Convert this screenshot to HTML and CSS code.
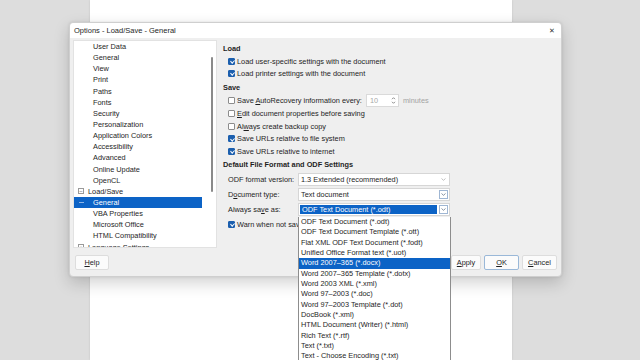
FILE: index.html
```html
<!DOCTYPE html>
<html>
<head>
<meta charset="utf-8">
<link rel="stylesheet" href="styles.css">
</head>
<body>
<div class="desk">
  <div class="page"></div>
</div>

<div class="dialog">
  <div class="titlebar">
    <span class="title">Options - Load/Save - General</span>
    <span class="close">✕</span>
  </div>
  <div class="main">
    <div class="tree">
      <div class="tree-rows">
        <div class="row child">User Data</div>
        <div class="row child">General</div>
        <div class="row child">View</div>
        <div class="row child">Print</div>
        <div class="row child">Paths</div>
        <div class="row child">Fonts</div>
        <div class="row child">Security</div>
        <div class="row child">Personalization</div>
        <div class="row child">Application Colors</div>
        <div class="row child">Accessibility</div>
        <div class="row child">Advanced</div>
        <div class="row child">Online Update</div>
        <div class="row child">OpenCL</div>
        <div class="row parent"><span class="exp">−</span>Load/Save</div>
        <div class="row child sel"><span class="line"></span>General</div>
        <div class="row child">VBA Properties</div>
        <div class="row child">Microsoft Office</div>
        <div class="row child">HTML Compatibility</div>
        <div class="row parent"><span class="exp">+</span>Language Settings</div>
      </div>
      <div class="scroll"><div class="thumb"></div></div>
    </div>

    <div class="panel">
      <div class="hdr">Load</div>
      <div class="opt"><span class="cb on"></span><span>Load user-specific settings with the document</span></div>
      <div class="opt"><span class="cb on"></span><span>Load printer settings with the document</span></div>

      <div class="hdr">Save</div>
      <div class="opt auto"><span class="cb"></span><span>Save <u>A</u>utoRecovery information every:</span>
        <span class="spin"><span class="num">10</span>
          <svg class="arrows" width="5" height="9" viewBox="0 0 5 9"><path d="M1 3.2 L2.5 1.7 L4 3.2 M1 5.8 L2.5 7.3 L4 5.8" fill="none" stroke="#707070" stroke-width="0.8"/></svg>
        </span>
        <span class="dim">minutes</span></div>
      <div class="opt"><span class="cb"></span><span><u>E</u>dit document properties before saving</span></div>
      <div class="opt"><span class="cb"></span><span>Al<u>w</u>ays create backup copy</span></div>
      <div class="opt"><span class="cb on"></span><span>Save URLs relative to file system</span></div>
      <div class="opt"><span class="cb on"></span><span>Save URLs relative to internet</span></div>

      <div class="hdr">Default File Format and ODF Settings</div>
      <div class="frow"><span class="lbl">ODF format version:</span>
        <span class="combo"><span class="ctext">1.3 Extended (recommended)</span><span class="cbtn plain"><svg width="5" height="3" viewBox="0 0 5 3"><path d="M0.5 0.5 L2.5 2.3 L4.5 0.5" fill="none" stroke="#b0b0b0" stroke-width="0.8"/></svg></span></span></div>
      <div class="frow"><span class="lbl">D<u>o</u>cument type:</span>
        <span class="combo"><span class="ctext">Text document</span><span class="cbtn"><svg width="5" height="3" viewBox="0 0 5 3"><path d="M0.5 0.5 L2.5 2.3 L4.5 0.5" fill="none" stroke="#6a7a8c" stroke-width="0.8"/></svg></span></span></div>
      <div class="frow"><span class="lbl">Always sa<u>v</u>e as:</span>
        <span class="combo"><span class="ctext active">ODF Text Document (*.odt)</span><span class="cbtn"><svg width="5" height="3" viewBox="0 0 5 3"><path d="M0.5 0.5 L2.5 2.3 L4.5 0.5" fill="none" stroke="#6a7a8c" stroke-width="0.8"/></svg></span></span></div>
      <div class="opt warn"><span class="cb on"></span><span>Warn when not saving in ODF or default format</span></div>
    </div>
  </div>
  <div class="footer">
    <button class="btn help"><u>H</u>elp</button>
    <span class="grow"></span>
    <button class="btn apply"><u>A</u>pply</button>
    <button class="btn ok"><u>O</u>K</button>
    <button class="btn cancel"><u>C</u>ancel</button>
  </div>
</div>

<div class="dropdown">
  <div class="item">ODF Text Document (*.odt)</div>
  <div class="item">ODF Text Document Template (*.ott)</div>
  <div class="item">Flat XML ODF Text Document (*.fodt)</div>
  <div class="item">Unified Office Format text (*.uot)</div>
  <div class="item hi">Word 2007–365 (*.docx)</div>
  <div class="item">Word 2007–365 Template (*.dotx)</div>
  <div class="item">Word 2003 XML (*.xml)</div>
  <div class="item">Word 97–2003 (*.doc)</div>
  <div class="item">Word 97–2003 Template (*.dot)</div>
  <div class="item">DocBook (*.xml)</div>
  <div class="item">HTML Document (Writer) (*.html)</div>
  <div class="item">Rich Text (*.rtf)</div>
  <div class="item">Text (*.txt)</div>
  <div class="item">Text - Choose Encoding (*.txt)</div>
</div>
</body>
</html>
```

FILE: styles.css
```css
* { box-sizing: border-box; }
html, body {
  margin: 0;
  width: 640px;
  height: 360px;
  overflow: hidden;
}
body {
  background: #dddddd;
  font-family: "Liberation Sans", Arial, sans-serif;
  font-size: 7.35px;
  color: #1e1e1e;
  position: relative;
}
u { text-decoration: underline; text-underline-offset: 1px; text-decoration-thickness: 0.6px; }

.desk {
  display: flex;
  height: 360px;
  padding-left: 90px;
}
.page {
  width: 422px;
  height: 360px;
  background: #ffffff;
  box-shadow: 0 0 2px rgba(0,0,0,0.12);
}

.dialog {
  position: absolute;
  left: 69px;
  top: 22px;
  width: 493px;
  height: 255px;
  background: #efefef;
  border: 1px solid #cfcfcf;
  border-radius: 4px;
  box-shadow: 0 6px 16px rgba(0,0,0,0.18), 0 0 3px rgba(0,0,0,0.1);
  display: flex;
  flex-direction: column;
}
.titlebar {
  height: 15px;
  background: #ffffff;
  border-radius: 4px 4px 0 0;
  display: flex;
  align-items: center;
  padding: 0 6px 0 4px;
  font-size: 7.5px;
}
.title { flex: 1; }
.close { font-size: 7px; color: #333; }

.main {
  height: 212px;
  display: flex;
  padding: 2px 0 0 3px;
}
.tree {
  width: 144px;
  height: 208px;
  background: #ffffff;
  border: 1px solid #e2e2e2;
  display: flex;
  overflow: hidden;
}
.tree-rows { flex: 1; }
.row {
  height: 11.15px;
  line-height: 11.15px;
  white-space: nowrap;
  display: flex;
  align-items: center;
}
.row.child { padding-left: 19px; }
.row.parent { padding-left: 3px; }
.exp {
  width: 6px;
  height: 6px;
  border: 1px solid #9a9a9a;
  font-size: 6px;
  line-height: 4px;
  text-align: center;
  color: #666;
  margin-right: 4px;
  margin-left: 1px;
}
.row.sel {
  background: #0c63c6;
  color: #ffffff;
  margin-right: 6px;
  position: relative;
}
.line {
  position: absolute;
  left: 5px;
  top: 5px;
  width: 5px;
  height: 1px;
  background: #8fb5e6;
}
.scroll {
  width: 8px;
  padding: 16px 2px 0 3px;
}
.thumb {
  width: 2px;
  height: 135px;
  background: #8a8a8a;
  border-radius: 1px;
}

.panel {
  flex: 1;
  padding: 1px 0 0 6px;
}
.hdr {
  font-weight: bold;
  height: 12px;
  line-height: 12px;
  margin-top: 2px;
}
.opt {
  height: 12.4px;
  display: flex;
  align-items: center;
  padding-left: 5px;
  white-space: nowrap;
}
.opt.auto { height: 14px; }
.cb {
  width: 7px;
  height: 7px;
  border: 1px solid #8c8c8c;
  border-radius: 1px;
  background: #ffffff;
  margin-right: 2px;
  flex: none;
}
.cb.on {
  background: #1c5fae;
  border-color: #1c5fae;
  position: relative;
}
.cb.on::after {
  content: "";
  position: absolute;
  left: 1.6px;
  top: 0.3px;
  width: 1.6px;
  height: 3.4px;
  border: solid #ffffff;
  border-width: 0 1px 1px 0;
  transform: rotate(45deg);
}
.spin {
  width: 33px;
  height: 13px;
  margin-left: 4px;
  background: #ffffff;
  border: 1px solid #dadada;
  display: flex;
  align-items: center;
  justify-content: space-between;
  padding: 0 2px 0 3px;
  color: #a8a8a8;
}
.dim { color: #a3a3a3; margin-left: 4px; }

.frow {
  height: 15px;
  display: flex;
  align-items: center;
  padding-left: 5px;
}
.hdr + .frow { margin-top: 1px; }
.lbl { width: 70px; white-space: nowrap; }
.combo {
  width: 152px;
  height: 13px;
  background: #ffffff;
  border: 1px solid #d6d6d6;
  display: flex;
  align-items: stretch;
}
.ctext {
  flex: 1;
  padding-left: 2px;
  display: flex;
  align-items: center;
  white-space: nowrap;
}
.ctext.active {
  background: #0c63c6;
  color: #ffffff;
  margin: 1px;
}
.cbtn {
  width: 9px;
  border: 1px solid #9fb6d3;
  margin: 1px;
  display: flex;
  align-items: center;
  justify-content: center;
}
.cbtn.plain { border-color: transparent; }
.opt.warn {
  height: 14px;
  width: 75px;
  overflow: hidden;
}

.footer {
  flex: 1;
  display: flex;
  align-items: flex-start;
  padding: 5px 4px 0 5px;
}
.grow { flex: 1; }
.btn {
  height: 15px;
  font-family: inherit;
  font-size: 7.35px;
  color: #1e1e1e;
  background: #fbfbfb;
  border: 1px solid #dddddd;
  border-radius: 2px;
  padding: 0;
  margin-left: 3px;
}
.btn.help { width: 34px; margin-left: 0; }
.btn.apply { width: 30px; }
.btn.ok { width: 35px; border-color: #9ab8d8; }
.btn.cancel { width: 35px; }

.dropdown {
  position: absolute;
  left: 298px;
  top: 217px;
  width: 153px;
  height: 150px;
  background: #ffffff;
  border: 1px solid #8d8d8d;
  border-top: none;
}
.item {
  height: 10.35px;
  line-height: 10.35px;
  padding-left: 2px;
  white-space: nowrap;
}
.item.hi {
  background: #0c63c6;
  color: #ffffff;
}
```
